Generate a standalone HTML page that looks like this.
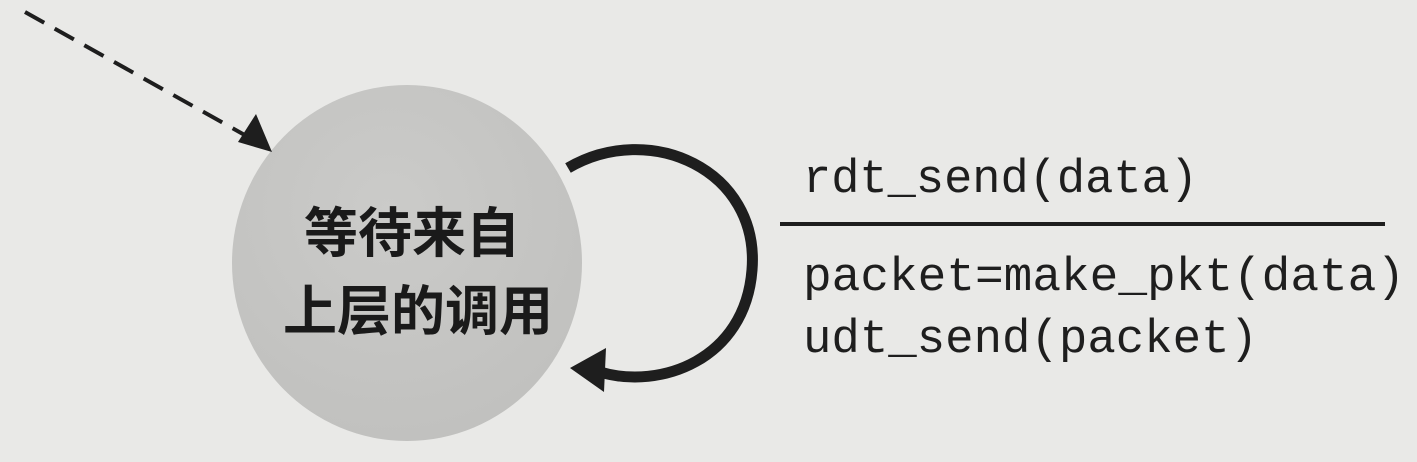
<!DOCTYPE html>
<html><head><meta charset="utf-8"><style>
html,body{margin:0;padding:0;background:#e9e9e7;}
svg{display:block}
</style></head><body>
<svg width="1417" height="462" viewBox="0 0 1417 462" xmlns="http://www.w3.org/2000/svg">
<defs>
<radialGradient id="g" cx="0.45" cy="0.35" r="0.7">
<stop offset="0" stop-color="#cbcbc9"/>
<stop offset="1" stop-color="#c0c0be"/>
</radialGradient>
</defs>
<rect width="1417" height="462" fill="#e9e9e7"/>
<ellipse cx="407" cy="263" rx="175" ry="178" fill="url(#g)"/>
<text x="412" y="252" font-family="'Noto Sans CJK SC',sans-serif" font-weight="700" font-size="54" text-anchor="middle" fill="#1a1a1a">等待来自</text>
<text x="418" y="330" font-family="'Noto Sans CJK SC',sans-serif" font-weight="700" font-size="54" text-anchor="middle" fill="#1a1a1a">上层的调用</text>
<line x1="25" y1="12" x2="250" y2="138" stroke="#1e1e1e" stroke-width="4" stroke-dasharray="22,12"/>
<polygon points="272,152 238,142 256,114" fill="#1e1e1e"/>
<path d="M568 168 C 650 120, 760 170, 752 270 C 745 360, 660 390, 600 372" fill="none" stroke="#1e1e1e" stroke-width="11"/>
<polygon points="570,368 606,348 604,392" fill="#1e1e1e"/>
<g font-family="'Liberation Mono',monospace" font-size="47" fill="#1e1e1e">
<text x="803" y="192" textLength="395" lengthAdjust="spacingAndGlyphs">rdt_send(data)</text>
<text x="803" y="290" textLength="602" lengthAdjust="spacingAndGlyphs">packet=make_pkt(data)</text>
<text x="803" y="352" textLength="455" lengthAdjust="spacingAndGlyphs">udt_send(packet)</text>
</g>
<line x1="780" y1="224" x2="1385" y2="224" stroke="#1e1e1e" stroke-width="4"/>
</svg>
</body></html>
